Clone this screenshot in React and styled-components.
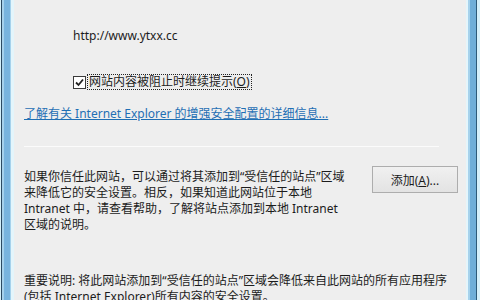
import { createGlobalStyle, styled } from "styled-components";

const GlobalStyle = createGlobalStyle`
    html, body {
        margin: 0;
        padding: 0;
        background: #eeeeee;
    }
`;

const Frame = styled.div`
    width: 480px;
    height: 300px;
    display: flex;
    overflow: hidden;
    font-family: "Noto Sans", "Noto Sans CJK SC", sans-serif;
    font-size: 12px;
    color: #1c1c1c;
`;

const Edge = styled.div`
    width: 14px;
    flex-shrink: 0;
    background: ${(p) => p.$right
        ? "linear-gradient(to right, #e4f5fb 0 2px, #a6d2ec 2px 4px, #6eaed8 4px 10px, #2c5a78 10px 11px, #d4f0fa 11px 14px)"
        : "linear-gradient(to right, #d4f0fa 0 1px, #2c4a62 1px 2px, #a6d2ec 2px 4px, #78b4de 4px 10px, #a6d2ec 10px 11px, #e4f5fb 11px 14px)"};
`;

const Content = styled.div`
    flex: 1;
    padding: 28px 8px 0 10px;
    background: #eeeeee;
    display: flex;
    flex-direction: column;
`;

const Line = styled.div`
    line-height: 16px;
    white-space: nowrap;
`;

const Url = styled(Line)`
    margin-left: 49px;
`;

const CheckRow = styled.label`
    display: flex;
    align-items: center;
    gap: 2px;
    margin: 31px 0 0 49px;
    line-height: 14px;
`;

const Box = styled.span`
    width: 11px;
    height: 11px;
    border: 1px solid #3a3a3a;
    background: #fff;
    display: flex;
    align-items: center;
    justify-content: center;
`;

const Focus = styled.span`
    outline: 1px dotted #222;
    padding: 0 1px;
    white-space: nowrap;
`;

const Key = styled.span`
    text-decoration: underline;
`;

const MoreLink = styled.a`
    margin-top: 17px;
    line-height: 16px;
    color: #1f6fb4;
    text-decoration: underline;
    white-space: nowrap;
    cursor: pointer;
`;

const Separator = styled.div`
    margin: 24px 19px 0 0;
    height: 1px;
    background: #c9c9c9;
    border-bottom: 1px solid #fbfbfb;
`;

const Section = styled.div`
    display: flex;
    align-items: flex-start;
    justify-content: space-between;
    margin-top: 22px;
`;

const Paragraph = styled.p`
    margin: 0;
    line-height: 16px;
    white-space: nowrap;
`;

const Button = styled.button`
    margin-top: -3px;
    width: 86px;
    height: 27px;
    border: 1px solid #adadad;
    background: linear-gradient(#f0f0f0, #e3e3e3);
    font: inherit;
    color: #1c1c1c;
    padding: 0;
`;

const Note = styled.p`
    margin: 40px 0 0;
    line-height: 16px;
    white-space: nowrap;
`;

function CheckMark() {
    return (
        <svg width="9" height="9" viewBox="0 0 9 9">
            <path d="M1 4.5 L3.5 7 L8 1.5" fill="none" stroke="#222" strokeWidth="1.8" />
        </svg>
    );
}

export default function App() {
    return (
        <Frame>
            <GlobalStyle />
            <Edge />
            <Content>
                <Url>http://www.ytxx.cc</Url>
                <CheckRow>
                    <Box><CheckMark /></Box>
                    <Focus>网站内容被阻止时继续提示(<Key>O</Key>)</Focus>
                </CheckRow>
                <MoreLink>了解有关 Internet Explorer 的增强安全配置的详细信息...</MoreLink>
                <Separator />
                <Section>
                    <Paragraph>
                        如果你信任此网站，可以通过将其添加到“受信任的站点”区域<br />
                        来降低它的安全设置。相反，如果知道此网站位于本地<br />
                        Intranet 中，请查看帮助，了解将站点添加到本地 Intranet<br />
                        区域的说明。
                    </Paragraph>
                    <Button>添加(<Key>A</Key>)...</Button>
                </Section>
                <Note>
                    重要说明: 将此网站添加到“受信任的站点”区域会降低来自此网站的所有应用程序<br />
                    (包括 Internet Explorer)所有内容的安全设置。
                </Note>
            </Content>
            <Edge $right />
        </Frame>
    );
}
